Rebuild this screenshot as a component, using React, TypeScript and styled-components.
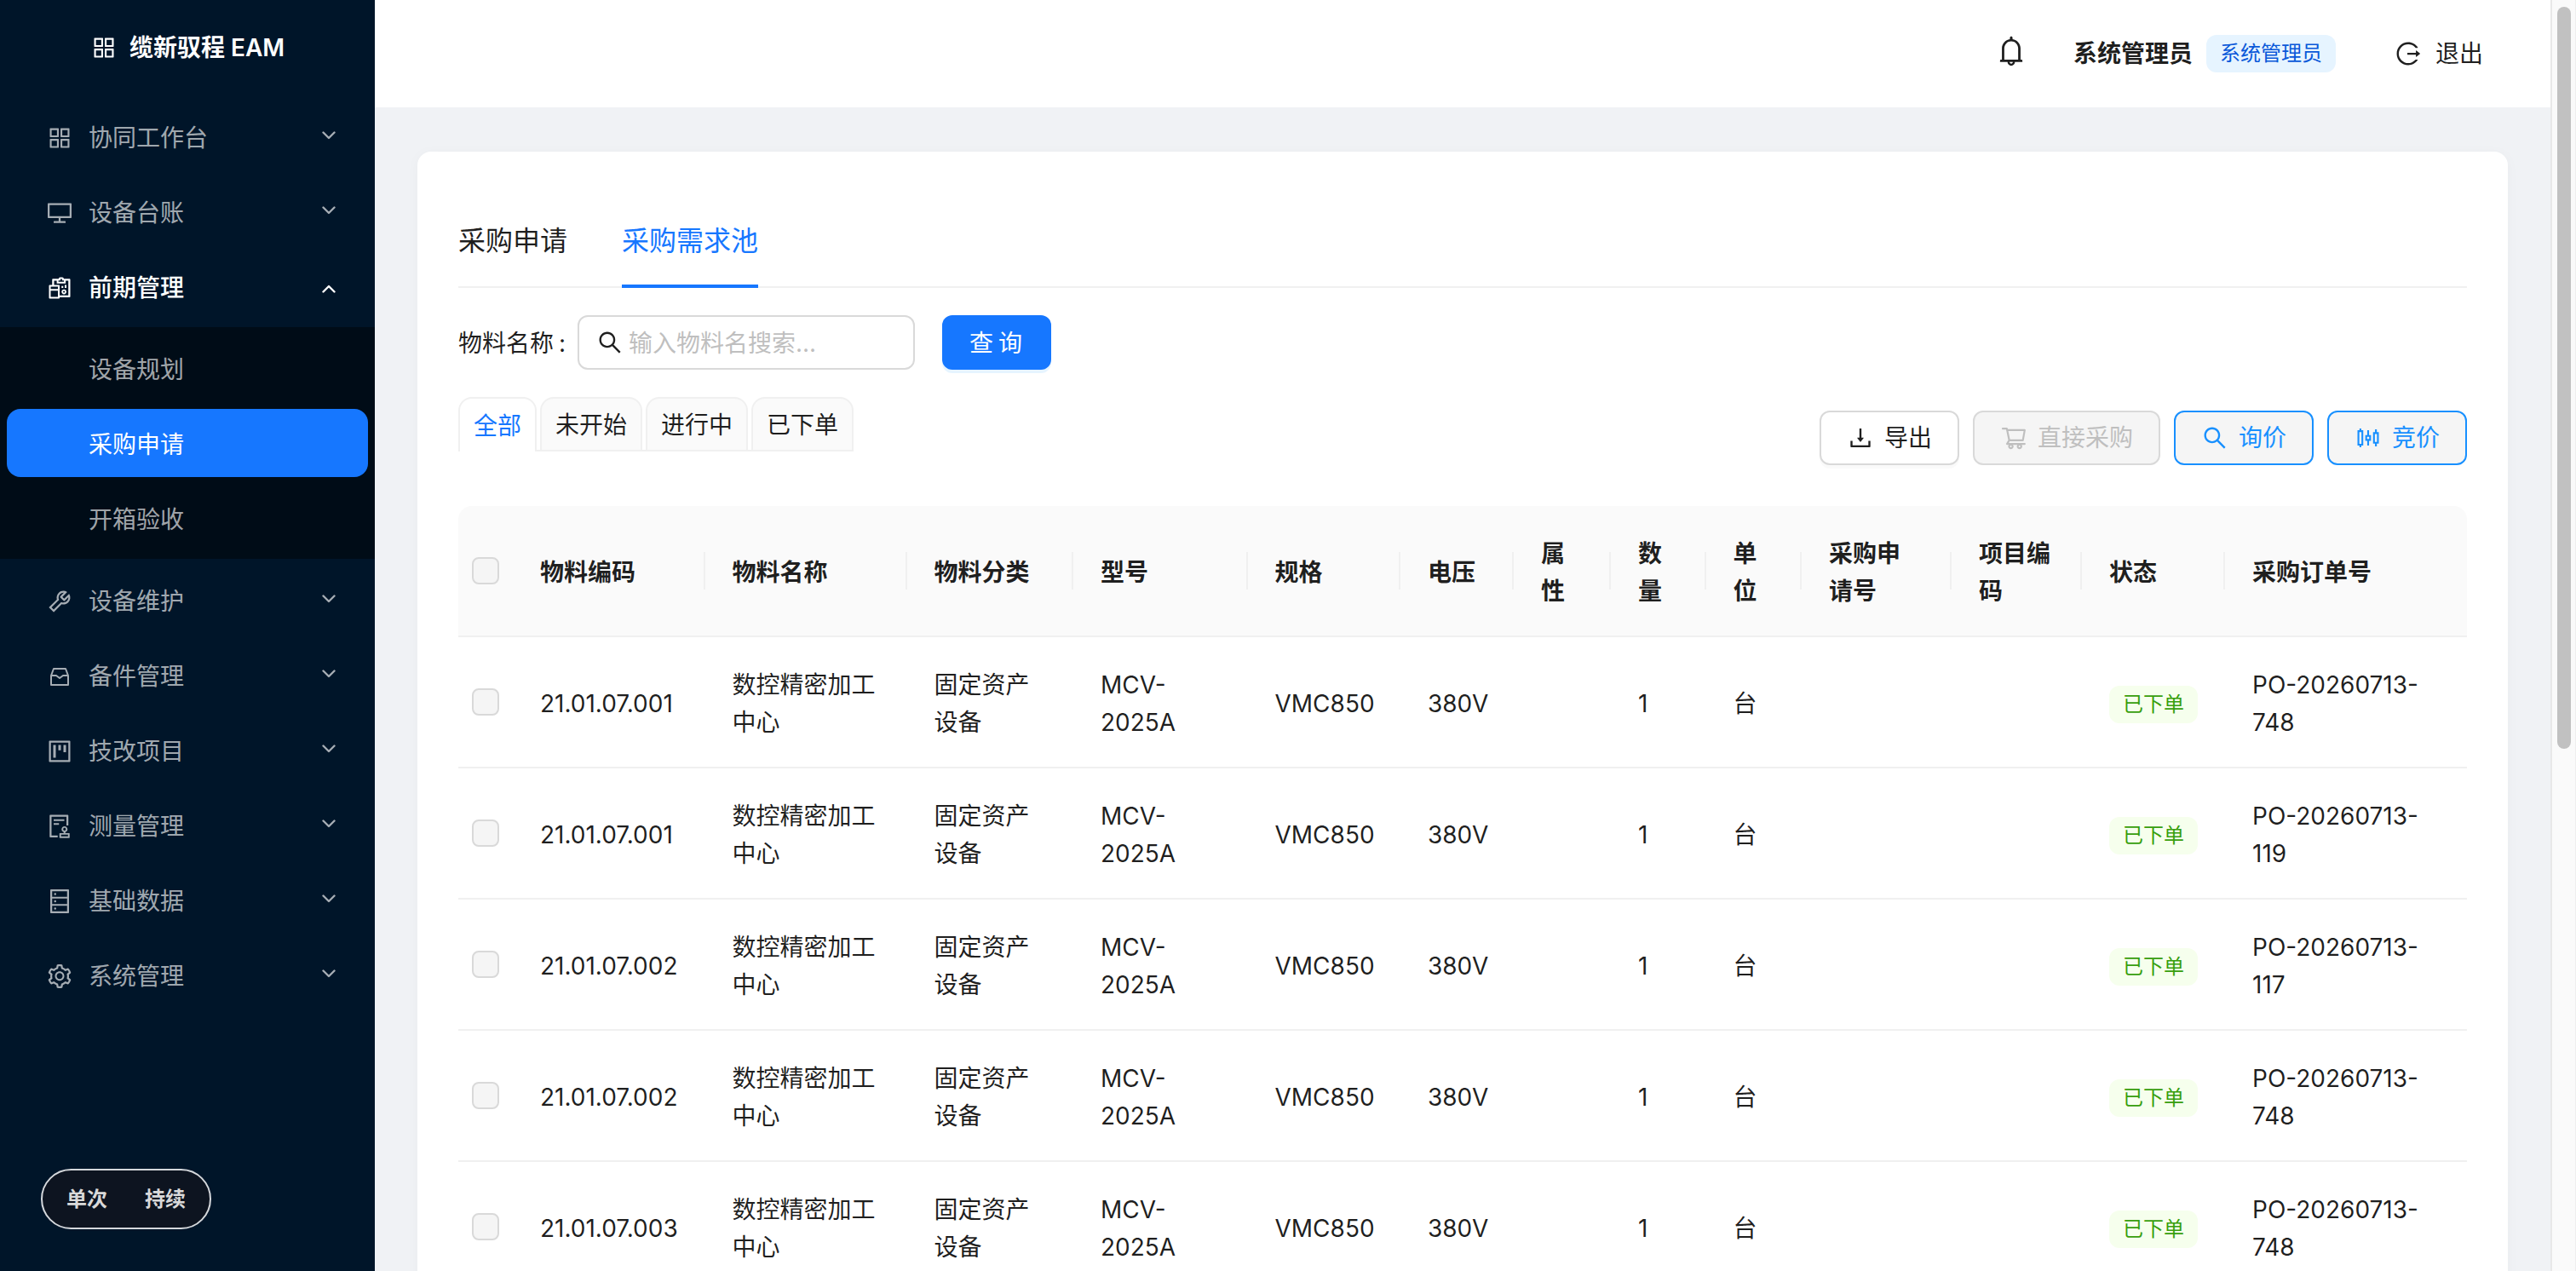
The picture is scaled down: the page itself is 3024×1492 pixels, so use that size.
import React from "react";
import styled, { createGlobalStyle } from "styled-components";
import {
  AiOutlineAppstore,
  AiOutlineDesktop,
  AiOutlineReconciliation,
  AiOutlineTool,
  AiOutlineProject,
  AiOutlineAudit,
  AiOutlineDatabase,
  AiOutlineSetting,
  AiOutlineBell,
  AiOutlineLogout,
  AiOutlineSearch,
  AiOutlineDownload,
  AiOutlineShoppingCart,
  AiOutlineSliders,
} from "react-icons/ai";

const GlobalStyle = createGlobalStyle`
  html, body { margin: 0; padding: 0; height: 100%; overflow: hidden; }
  body {
    font-family: Inter, "Noto Sans CJK SC", sans-serif;
    font-size: 28px;
    line-height: 44px;
    color: rgba(0, 0, 0, 0.88);
    background: #f0f2f5;
  }
  * { box-sizing: border-box; }
`;

const Shell = styled.div`
  display: flex;
  width: 100vw;
  height: 100vh;
  overflow: hidden;
`;

const Sidebar = styled.aside`
  flex: 0 0 440px;
  display: flex;
  flex-direction: column;
  background: #001529;
`;

const Logo = styled.div`
  flex: 0 0 112px;
  display: flex;
  align-items: center;
  justify-content: center;
  gap: 14px;
  color: #fff;
  font-weight: 600;
  font-size: 28px;
`;

const MenuList = styled.nav`
  display: flex;
  flex-direction: column;
  padding-top: 8px;
`;

const MenuItem = styled.div<{ $open?: boolean }>`
  height: 80px;
  margin: 0 8px 8px;
  padding: 3px 38px 0 46px;
  display: flex;
  align-items: center;
  gap: 18px;
  color: ${(p) => (p.$open ? "#fff" : "rgba(255, 255, 255, 0.65)")};
  font-weight: ${(p) => (p.$open ? 500 : 400)};
`;

const MenuLabel = styled.span`
  flex: 1;
`;

const Chevron = styled.svg<{ $up?: boolean }>`
  width: 16px;
  height: 10px;
  flex: none;
  margin-top: ${(p) => (p.$up ? "2px" : "-6px")};
  transform: ${(p) => (p.$up ? "rotate(180deg)" : "none")};
`;

const SubMenu = styled.div`
  background: #000c17;
  padding: 8px 0 0;
  margin-bottom: 8px;
  display: flex;
  flex-direction: column;
`;

const SubItem = styled.div<{ $active?: boolean }>`
  height: 80px;
  margin: 0 8px 8px;
  padding: 3px 0 0 96px;
  display: flex;
  align-items: center;
  border-radius: 16px;
  color: ${(p) => (p.$active ? "#fff" : "rgba(255, 255, 255, 0.65)")};
  background: ${(p) => (p.$active ? "#1677ff" : "transparent")};
`;

const ModeToggle = styled.div`
  margin: auto 0 49px 48px;
  width: 200px;
  height: 71px;
  display: flex;
  align-items: center;
  justify-content: center;
  gap: 44px;
  border: 2px solid #d4d7db;
  border-radius: 36px;
  background: #0d1420;
  color: #d9d9d9;
  font-size: 24px;
  font-weight: 600;
`;

const Main = styled.main`
  flex: 1;
  min-width: 0;
  height: 100%;
  overflow: hidden;
  background: #f0f2f5;
`;

const ScrollRail = styled.div`
  flex: 0 0 30px;
  padding: 8px 5px 0 6px;
  background: #fafafa;
  border-left: 2px solid #e8e8e8;
  border-right: 1px solid #efefef;
`;

const ScrollThumb = styled.div`
  height: 871px;
  border-radius: 8px;
  background: #c1c1c1;
`;

const TopBar = styled.header`
  height: 126px;
  background: #fff;
  display: flex;
  align-items: center;
  justify-content: flex-end;
  padding-right: 79px;
`;

const BellWrap = styled.span`
  display: flex;
  margin: 0 53px 6px 0;
  color: rgba(0, 0, 0, 0.88);
`;

const UserName = styled.span`
  font-weight: 600;
`;

const RoleTag = styled.span`
  margin: 0 69px 0 16px;
  height: 44px;
  padding: 0 16px;
  display: flex;
  align-items: center;
  border-radius: 12px;
  background: #e6f4ff;
  color: #0958d9;
  font-size: 24px;
`;

const Logout = styled.span`
  display: flex;
  align-items: center;
  gap: 16px;
`;

const Card = styled.section`
  margin: 52px 50px 52px;
  padding: 48px;
  background: #fff;
  border-radius: 16px;
  box-shadow: 0 2px 16px rgba(0, 0, 0, 0.03);
`;

const TabBar = styled.div`
  height: 112px;
  display: flex;
  gap: 64px;
  border-bottom: 2px solid #f0f0f0;
`;

const Tab = styled.div<{ $active?: boolean }>`
  position: relative;
  padding-top: 35px;
  font-size: 32px;
  line-height: 44px;
  color: ${(p) => (p.$active ? "#1677ff" : "rgba(0, 0, 0, 0.88)")};

  &::after {
    content: "";
    display: ${(p) => (p.$active ? "block" : "none")};
    position: absolute;
    left: 0;
    right: 0;
    bottom: -2px;
    height: 4px;
    background: #1677ff;
  }
`;

const FilterRow = styled.form`
  margin-top: 32px;
  display: flex;
  align-items: center;
`;

const FieldLabel = styled.label`
  margin: 2px 14px 0 0;
  word-spacing: -2px;
`;

const SearchBox = styled.div`
  width: 396px;
  height: 64px;
  padding: 0 20px;
  display: flex;
  align-items: center;
  gap: 6px;
  border: 2px solid #d9d9d9;
  border-radius: 12px;
  background: #fff;
`;

const SearchInput = styled.input`
  flex: 1;
  min-width: 0;
  border: 0;
  outline: 0;
  padding: 2px 0 0;
  font: inherit;
  color: inherit;
  background: transparent;
  &::placeholder {
    color: #bfbfbf;
    opacity: 1;
  }
`;

const PrimaryButton = styled.button`
  margin-left: 32px;
  width: 128px;
  height: 64px;
  padding: 2px 0 0 4px;
  border: 0;
  border-radius: 12px;
  background: #1677ff;
  color: #fff;
  font: inherit;
  letter-spacing: 6px;
  box-shadow: 0 4px 0 rgba(5, 145, 255, 0.1);
`;

const Toolbar = styled.div`
  margin-top: 32px;
  height: 80px;
  display: flex;
  justify-content: space-between;
  align-items: flex-end;
`;

const StatusTabs = styled.div`
  align-self: flex-start;
  height: 64px;
  display: flex;
  gap: 4px;
  border-bottom: 2px solid #f0f0f0;
`;

const StatusTab = styled.div<{ $active?: boolean }>`
  height: ${(p) => (p.$active ? "64px" : "62px")};
  padding: 2px 16px 0;
  display: flex;
  align-items: center;
  border: 2px solid #f0f0f0;
  border-bottom: 0;
  border-radius: 16px 16px 0 0;
  background: ${(p) => (p.$active ? "#fff" : "#fafafa")};
  color: ${(p) => (p.$active ? "#1677ff" : "rgba(0, 0, 0, 0.88)")};
`;

const Actions = styled.div`
  display: flex;
  gap: 16px;
`;

const ActionButton = styled.button<{ $variant?: "default" | "disabled" | "link" }>`
  height: 64px;
  padding: 0 30px;
  display: flex;
  align-items: center;
  gap: 12px;
  font: inherit;
  border-radius: 12px;
  border: 2px solid
    ${(p) => (p.$variant === "link" ? "#1890ff" : "#d9d9d9")};
  color: ${(p) =>
    p.$variant === "link"
      ? "#1890ff"
      : p.$variant === "disabled"
      ? "#bfbfbf"
      : "rgba(0, 0, 0, 0.88)"};
  background: ${(p) => (p.$variant === "default" ? "#fff" : "#f5f5f5")};
  box-shadow: ${(p) =>
    p.$variant === "default" ? "0 4px 0 rgba(0, 0, 0, 0.02)" : "none"};
`;

const Table = styled.table`
  margin-top: 48px;
  width: 100%;
  table-layout: fixed;
  border-collapse: separate;
  border-spacing: 0;
`;

const Col = styled.col<{ $w: number }>`
  width: ${(p) => p.$w}px;
`;

const HeadCell = styled.th<{ $divider?: boolean }>`
  position: relative;
  height: 154px;
  padding: 3px 34px 0 32px;
  text-align: left;
  font-weight: 600;
  background: #fafafa;
  border-bottom: 2px solid #f0f0f0;

  &:first-child {
    border-top-left-radius: 16px;
  }
  &:last-child {
    border-top-right-radius: 16px;
  }
  &::before {
    content: "";
    display: ${(p) => (p.$divider ? "block" : "none")};
    position: absolute;
    right: 0;
    top: 50%;
    width: 2px;
    height: 44px;
    margin-top: -22px;
    background: #f0f0f0;
  }
`;

const BodyCell = styled.td`
  height: 154px;
  padding: 3px 32px 0;
  border-bottom: 2px solid #f0f0f0;
`;

const CheckCell = styled.div`
  display: flex;
  justify-content: center;
  margin: -3px -32px 0;
`;

const CheckBox = styled.span`
  display: block;
  width: 32px;
  height: 32px;
  border: 2px solid #d9d9d9;
  border-radius: 8px;
  background: #f5f5f5;
`;

const StatusTag = styled.span`
  display: inline-flex;
  align-items: center;
  height: 44px;
  padding: 0 16px;
  border-radius: 12px;
  background: #f6ffed;
  color: #389e0d;
  font-size: 24px;
  vertical-align: middle;
`;

const ChevronIcon = ({ up }: { up?: boolean }) => (
  <Chevron $up={up} viewBox="0 0 16 10" fill="none">
    <path
      d="M1.5 1.5 L8 8 L14.5 1.5"
      stroke="currentColor"
      strokeWidth="2.4"
      strokeLinecap="round"
      strokeLinejoin="round"
    />
  </Chevron>
);

const InboxIcon = ({ size }: { size: number }) => (
  <svg width={size} height={size} viewBox="0 0 32 32" fill="none">
    <path
      d="M6 15 L9 7 H23 L26 15 V26 H6 Z M6 15 H12 L16 18 L20 15 H26"
      stroke="currentColor"
      strokeWidth="2"
      strokeLinejoin="round"
    />
  </svg>
);

const topMenus = [
  { label: "协同工作台", icon: AiOutlineAppstore },
  { label: "设备台账", icon: AiOutlineDesktop },
  { label: "前期管理", icon: AiOutlineReconciliation, open: true },
  { label: "设备维护", icon: AiOutlineTool },
  { label: "备件管理", icon: InboxIcon },
  { label: "技改项目", icon: AiOutlineProject },
  { label: "测量管理", icon: AiOutlineAudit },
  { label: "基础数据", icon: AiOutlineDatabase },
  { label: "系统管理", icon: AiOutlineSetting },
];

const subMenus = [
  { label: "设备规划" },
  { label: "采购申请", active: true },
  { label: "开箱验收" },
];

const columns = [
  { w: 64, title: "" },
  { w: 225.5, title: "物料编码" },
  { w: 237, title: "物料名称" },
  { w: 195.5, title: "物料分类" },
  { w: 204.5, title: "型号" },
  { w: 179.5, title: "规格" },
  { w: 133, title: "电压" },
  { w: 114, title: "属性" },
  { w: 111.5, title: "数量" },
  { w: 112.5, title: "单位" },
  { w: 176, title: "采购申请号" },
  { w: 153, title: "项目编码" },
  { w: 168, title: "状态" },
  { w: 284, title: "采购订单号" },
];

const rows = [
  { code: "21.01.07.001", po: "PO-20260713-748" },
  { code: "21.01.07.001", po: "PO-20260713-119" },
  { code: "21.01.07.002", po: "PO-20260713-117" },
  { code: "21.01.07.002", po: "PO-20260713-748" },
  { code: "21.01.07.003", po: "PO-20260713-748" },
];

export default function App() {
  return (
    <Shell>
      <GlobalStyle />
      <Sidebar>
        <Logo>
          <AiOutlineAppstore size={32} />
          <span>缆新驭程 EAM</span>
        </Logo>
        <MenuList>
          {topMenus.map((m) => {
            const Icon = m.icon;
            return (
              <React.Fragment key={m.label}>
                <MenuItem $open={m.open}>
                  <Icon size={32} />
                  <MenuLabel>{m.label}</MenuLabel>
                  <ChevronIcon up={m.open} />
                </MenuItem>
                {m.open && (
                  <SubMenu>
                    {subMenus.map((s) => (
                      <SubItem key={s.label} $active={s.active}>
                        {s.label}
                      </SubItem>
                    ))}
                  </SubMenu>
                )}
              </React.Fragment>
            );
          })}
        </MenuList>
        <ModeToggle>
          <span>单次</span>
          <span>持续</span>
        </ModeToggle>
      </Sidebar>
      <Main>
        <TopBar>
          <BellWrap>
            <AiOutlineBell size={40} />
          </BellWrap>
          <UserName>系统管理员</UserName>
          <RoleTag>系统管理员</RoleTag>
          <Logout>
            <AiOutlineLogout size={32} />
            <span>退出</span>
          </Logout>
        </TopBar>
        <Card>
          <TabBar>
            <Tab>采购申请</Tab>
            <Tab $active>采购需求池</Tab>
          </TabBar>
          <FilterRow>
            <FieldLabel>物料名称 :</FieldLabel>
            <SearchBox>
              <AiOutlineSearch size={32} />
              <SearchInput placeholder="输入物料名搜索..." />
            </SearchBox>
            <PrimaryButton type="button">查询</PrimaryButton>
          </FilterRow>
          <Toolbar>
            <StatusTabs>
              <StatusTab $active>全部</StatusTab>
              <StatusTab>未开始</StatusTab>
              <StatusTab>进行中</StatusTab>
              <StatusTab>已下单</StatusTab>
            </StatusTabs>
            <Actions>
              <ActionButton $variant="default">
                <AiOutlineDownload size={32} />
                导出
              </ActionButton>
              <ActionButton $variant="disabled">
                <AiOutlineShoppingCart size={32} />
                直接采购
              </ActionButton>
              <ActionButton $variant="link">
                <AiOutlineSearch size={32} />
                询价
              </ActionButton>
              <ActionButton $variant="link">
                <AiOutlineSliders size={32} />
                竞价
              </ActionButton>
            </Actions>
          </Toolbar>
          <Table>
            <colgroup>
              {columns.map((c, i) => (
                <Col key={i} $w={c.w} />
              ))}
            </colgroup>
            <thead>
              <tr>
                {columns.map((c, i) => (
                  <HeadCell key={i} $divider={i > 0 && i < columns.length - 1}>
                    {i === 0 ? (
                      <CheckCell>
                        <CheckBox />
                      </CheckCell>
                    ) : (
                      c.title
                    )}
                  </HeadCell>
                ))}
              </tr>
            </thead>
            <tbody>
              {rows.map((r, i) => (
                <tr key={i}>
                  <BodyCell>
                    <CheckCell>
                      <CheckBox />
                    </CheckCell>
                  </BodyCell>
                  <BodyCell>{r.code}</BodyCell>
                  <BodyCell>数控精密加工中心</BodyCell>
                  <BodyCell>固定资产设备</BodyCell>
                  <BodyCell>MCV-2025A</BodyCell>
                  <BodyCell>VMC850</BodyCell>
                  <BodyCell>380V</BodyCell>
                  <BodyCell />
                  <BodyCell>1</BodyCell>
                  <BodyCell>台</BodyCell>
                  <BodyCell />
                  <BodyCell />
                  <BodyCell>
                    <StatusTag>已下单</StatusTag>
                  </BodyCell>
                  <BodyCell>{r.po}</BodyCell>
                </tr>
              ))}
            </tbody>
          </Table>
        </Card>
      </Main>
      <ScrollRail>
        <ScrollThumb />
      </ScrollRail>
    </Shell>
  );
}
